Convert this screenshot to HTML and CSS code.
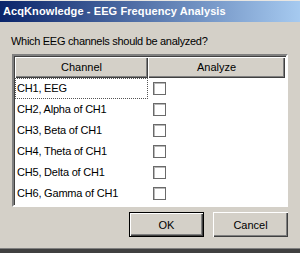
FILE: index.html
```html
<!DOCTYPE html>
<html lang="en">
<head>
    <meta charset="UTF-8">
    <title>AcqKnowledge - EEG Frequency Analysis</title>
    <link rel="stylesheet" href="styles.css">
</head>
<body>
    <div class="window">
        <div class="titlebar">AcqKnowledge - EEG Frequency Analysis</div>
        <div class="content">
            <p class="prompt">Which EEG channels should be analyzed?</p>
            <div class="listbox">
                <div class="list-head">
                    <div class="head-cell col-channel">Channel</div>
                    <div class="head-cell col-analyze">Analyze</div>
                </div>
                <div class="row">
                    <div class="cell col-channel focused">CH1, EEG</div>
                    <div class="cell col-analyze"><span class="checkbox"></span></div>
                </div>
                <div class="row">
                    <div class="cell col-channel">CH2, Alpha of CH1</div>
                    <div class="cell col-analyze"><span class="checkbox"></span></div>
                </div>
                <div class="row">
                    <div class="cell col-channel">CH3, Beta of CH1</div>
                    <div class="cell col-analyze"><span class="checkbox"></span></div>
                </div>
                <div class="row">
                    <div class="cell col-channel">CH4, Theta of CH1</div>
                    <div class="cell col-analyze"><span class="checkbox"></span></div>
                </div>
                <div class="row">
                    <div class="cell col-channel">CH5, Delta of CH1</div>
                    <div class="cell col-analyze"><span class="checkbox"></span></div>
                </div>
                <div class="row">
                    <div class="cell col-channel">CH6, Gamma of CH1</div>
                    <div class="cell col-analyze"><span class="checkbox"></span></div>
                </div>
            </div>
            <div class="buttons">
                <button class="btn btn-default">OK</button>
                <button class="btn">Cancel</button>
            </div>
        </div>
    </div>
</body>
</html>
```

FILE: styles.css
```css
body {
    margin: 0;
    background: #404040;
    font-family: 'Liberation Sans', Arial, sans-serif;
    font-size: 11px;
    color: #000;
}
.window {
    width: 300px;
    height: 249px;
    background: #d4d0c8;
    border-top: 1px solid #e8e6e2;
    box-sizing: border-box;
    border-bottom: 1px solid #808080;
}
.titlebar {
    height: 21px;
    line-height: 21px;
    padding-left: 3px;
    background: linear-gradient(to right, #0a246a, #a6caf0);
    color: #fff;
    font-weight: bold;
    font-size: 11px;
    letter-spacing: 0.1px;
}
.content {
    padding: 0 12px;
}
.prompt {
    margin: 13px 0 0 -1px;
    height: 19px;
    line-height: 13px;
    letter-spacing: -0.3px;
}
.listbox {
    border: 2px solid;
    border-color: #808080 #ffffff #ffffff #808080;
    box-shadow: inset 1px 1px #404040;
    background: #fff;
    height: 153px;
    box-sizing: border-box;
    padding: 1px 0 0 1px;
}
.list-head {
    display: flex;
    height: 21px;
}
.head-cell {
    background: #d4d0c8;
    text-align: center;
    line-height: 20px;
    box-shadow: inset 1px 1px #fff, inset -1px -1px #404040, inset -2px -2px #808080;
}
.col-channel {
    width: 133px;
}
.col-analyze {
    width: 137px;
}
.row {
    display: flex;
    height: 21px;
}
.cell {
    line-height: 21px;
    padding-left: 2px;
    box-sizing: border-box;
    letter-spacing: -0.2px;
}
.cell.col-analyze {
    padding-left: 5px;
    display: flex;
    align-items: center;
}
.focused {
    outline: 1px dotted #555;
    outline-offset: -1px;
}
.checkbox {
    display: block;
    width: 11px;
    height: 11px;
    border: 1px solid #6a6a6a;
    box-shadow: inset 1px 1px #b8b8b8;
    background: #fff;
}
.buttons {
    display: flex;
    justify-content: flex-end;
    gap: 9px;
    margin-top: 5px;
}
.btn {
    width: 75px;
    height: 25px;
    background: #d4d0c8;
    font-family: 'Liberation Sans', Arial, sans-serif;
    font-size: 11px;
    color: #000;
    border: none;
    padding: 0;
    box-shadow: inset 1px 1px #fff, inset -1px -1px #404040, inset -2px -2px #808080;
}
.btn-default {
    border: 1px solid #000;
    box-shadow: inset 1px 1px #fff, inset -1px -1px #404040, inset -2px -2px #808080;
}
```
